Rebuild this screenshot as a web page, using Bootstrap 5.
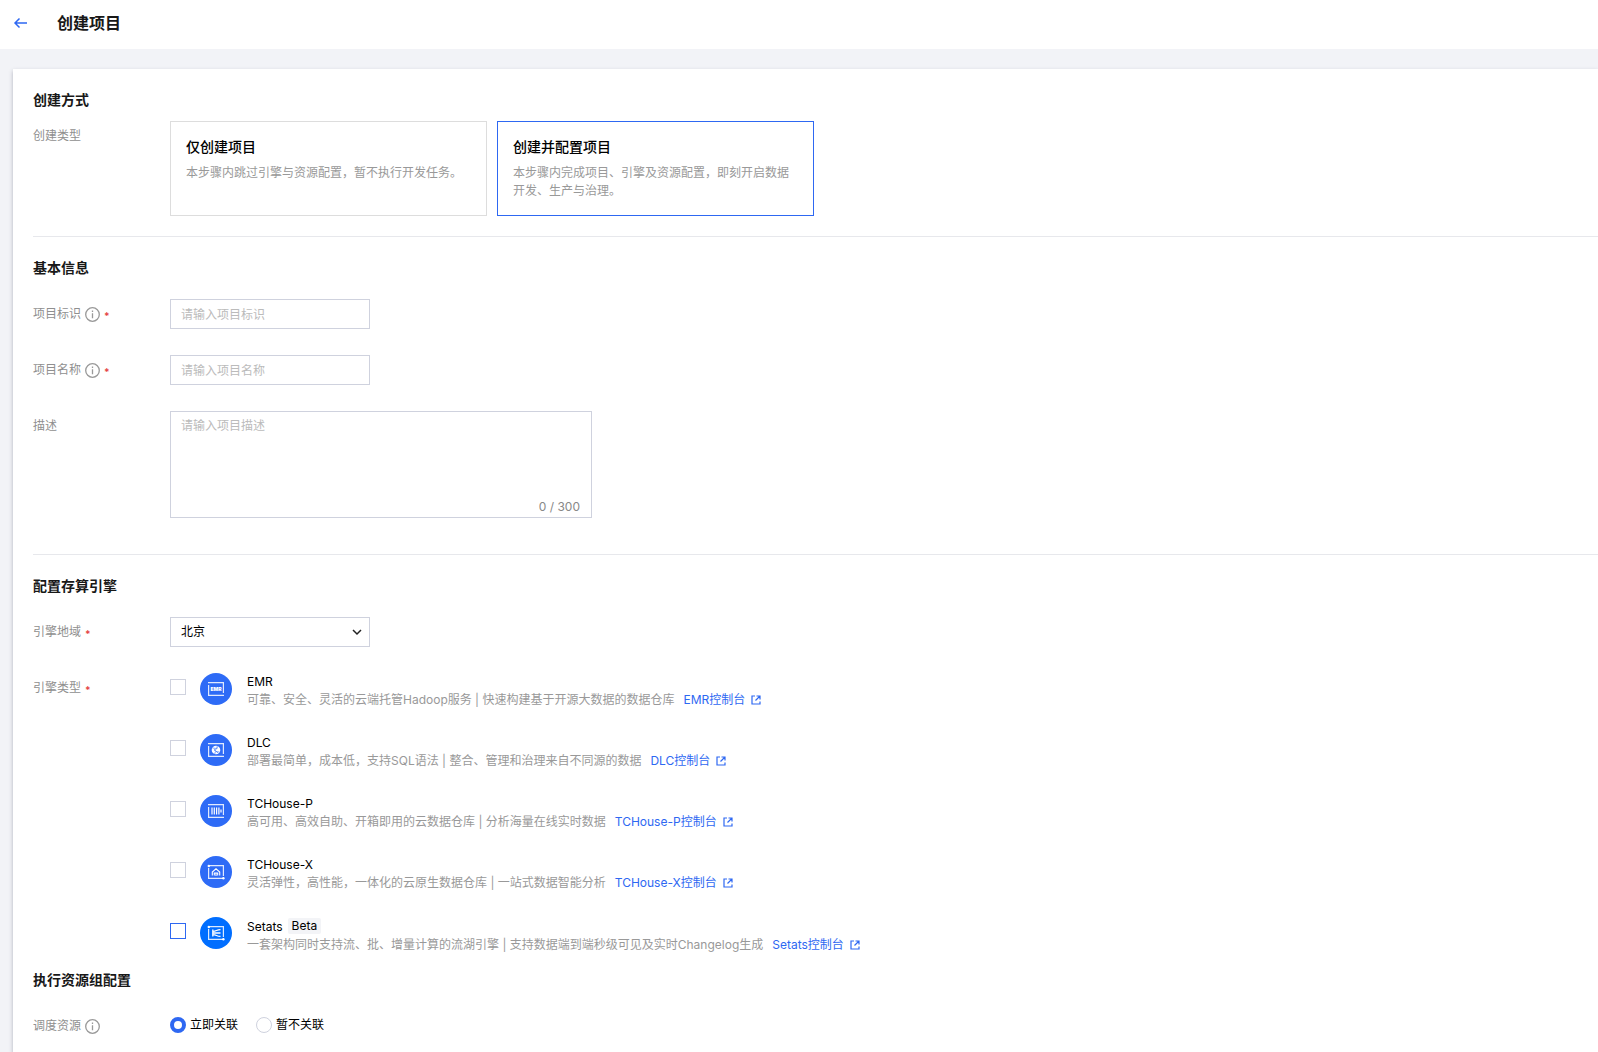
<!DOCTYPE html>
<html lang="zh-CN">
<head>
<meta charset="utf-8">
<meta name="viewport" content="width=device-width, initial-scale=1">
<title>创建项目</title>
<link href="https://cdn.jsdelivr.net/npm/bootstrap@5.3.0/dist/css/bootstrap.min.css" rel="stylesheet">
<style>
  :root { --brand: #2e68f2; --muted: #999; --line: #cfd2de; }
  body {
    font-family: Inter, "Noto Sans CJK SC", sans-serif;
    font-size: 12px; line-height: 18px; color: #000; background: #f2f3f7;
  }
  a { color: var(--brand); text-decoration: none; }
  svg { display: block; flex: none; }
  .page-head { height: 49px; padding: 0 13px 3px; gap: 28px; }
  .page-head h1 { font-size: 16px; line-height: 24px; font-weight: 600; color: #181818; }
  .page-main { padding: 20px 0 0 13px; }
  .panel { padding: 20px 0 0 20px; box-shadow: 0 2px 4px rgba(54, 58, 80, .35); }
  .sec-title { font-size: 14px; line-height: 22px; font-weight: 600; color: #181818; margin: 0 0 20px; }
  .sec-title.tight { margin-bottom: 10px; }
  .rule { margin: 20px 0; border: 0; border-top: 1px solid #e7e8ec; opacity: 1; }
  .field { margin-bottom: 26px; }
  .field-label { flex: 0 0 137px; padding-top: 6px; color: #8f8f8f; gap: 4px; }
  .field-label svg { margin-top: 2px; }
  .req { color: #e54545; font-size: 10px; font-weight: 700; line-height: 22px; }
  .box, .box:focus {
    border: 1px solid var(--line); border-radius: 0; font-size: 12px; line-height: 18px;
    padding: 5px 10px; color: #000; box-shadow: none;
  }
  .box::placeholder { color: #bbb; }
  .w-input { width: 200px; height: 30px; }
  .desc-wrap { width: 422px; }
  .desc-wrap .box { height: 107px; resize: none; display: block; }
  .counter { right: 12px; bottom: 2px; color: #888; }
  .pick {
    background: #fff url("data:image/svg+xml,%3Csvg xmlns='http://www.w3.org/2000/svg' viewBox='0 0 10 10'%3E%3Cpath d='M1 3l4 4 4-4' fill='none' stroke='%23222' stroke-width='1.5'/%3E%3C/svg%3E") no-repeat right 7px center / 10px 10px;
  }
  .modes { gap: 10px; }
  .mode { width: 317px; min-height: 95px; padding: 14px 15px; border: 1px solid #ddd; cursor: pointer; }
  .btn-check:checked + .mode { border-color: var(--brand); }
  .mode-name { font-size: 14px; line-height: 22px; font-weight: 500; margin-bottom: 6px; }
  .mode-desc { color: var(--muted); }
  .tick, .dot { appearance: none; width: 16px; height: 16px; margin: 0; border: 1px solid var(--line); background: #fff; flex: none; }
  .tick { margin-top: 6px; }
  .tick.active { border-color: var(--brand); }
  .dot { border-radius: 50%; }
  .dot:checked { border: 4px solid var(--brand); }
  .engines { gap: 25px; margin-bottom: 15px; }
  .engine-icon { margin: 0 15px 0 14px; }
  .engine-desc { color: var(--muted); margin-right: 9px; }
  .ext { gap: 6px; }
  .beta { background: #f3f4f7; border-radius: 2px; padding: 0 4px; line-height: 16px; margin: 1px 0 2px 5px; }
  .choice { gap: 4px; margin-right: 18px; padding-bottom: 2px; }
  .choices { padding-top: 5px; }
</style>
<script src="https://cdn.jsdelivr.net/npm/bootstrap@5.3.0/dist/js/bootstrap.bundle.min.js"></script>
</head>
<body class="min-vh-100 d-flex flex-column">
<svg width="0" height="0" class="position-absolute" aria-hidden="true">
  <symbol id="info" viewBox="0 0 15 15"><circle cx="7.500" cy="7.500" r="6.800" fill="none" stroke="#999" stroke-width="1.300"/><path d="M7.500 3.600v1.500M7.500 6.300v5" stroke="#999" stroke-width="1.300"/></symbol>
  <symbol id="ext" viewBox="0 0 10 10"><path d="M4 1H1v8h8V6.500M5.500 1H9v3.500M9 1L4.500 5.500" fill="none" stroke="#2e68f2" stroke-width="1.200"/></symbol>
  <symbol id="frame" viewBox="0 0 32 32"><path d="M8 9.700h15.400V20M8.600 12v10.300H24" fill="none" stroke="#fff" stroke-opacity=".85" stroke-width="1.200"/></symbol>
</svg>

<header class="page-head bg-white d-flex align-items-center">
  <a href="#" aria-label="返回"><svg width="16" height="16" viewBox="0 0 16 16"><path d="M14 8H2M6.500 3.500L2 8l4.500 4.500" fill="none" stroke="#2e68f2" stroke-width="1.500"/></svg></a>
  <h1 class="m-0">创建项目</h1>
</header>

<main class="page-main flex-grow-1 d-flex flex-column">
<form class="panel bg-white flex-grow-1">
  <h2 class="sec-title tight">创建方式</h2>
  <div class="d-flex">
    <div class="field-label">创建类型</div>
    <div class="modes d-flex">
      <input class="btn-check" type="radio" name="mode" id="modeOnly">
      <label class="mode" for="modeOnly"><div class="mode-name">仅创建项目</div><div class="mode-desc">本步骤内跳过引擎与资源配置，暂不执行开发任务。</div></label>
      <input class="btn-check" type="radio" name="mode" id="modeFull" checked>
      <label class="mode" for="modeFull"><div class="mode-name">创建并配置项目</div><div class="mode-desc">本步骤内完成项目、引擎及资源配置，即刻开启数据开发、生产与治理。</div></label>
    </div>
  </div>
  <hr class="rule">

  <h2 class="sec-title">基本信息</h2>
  <div class="field d-flex">
    <label class="field-label d-flex" for="pid">项目标识<svg width="15" height="15"><use href="#info"/></svg><span class="req">*</span></label>
    <input id="pid" type="text" class="form-control box w-input" placeholder="请输入项目标识">
  </div>
  <div class="field d-flex">
    <label class="field-label d-flex" for="pname">项目名称<svg width="15" height="15"><use href="#info"/></svg><span class="req">*</span></label>
    <input id="pname" type="text" class="form-control box w-input" placeholder="请输入项目名称">
  </div>
  <div class="d-flex pb-3">
    <label class="field-label" for="pdesc">描述</label>
    <div class="desc-wrap position-relative">
      <textarea id="pdesc" class="form-control box" placeholder="请输入项目描述"></textarea>
      <span class="counter position-absolute">0 / 300</span>
    </div>
  </div>
  <hr class="rule">

  <h2 class="sec-title">配置存算引擎</h2>
  <div class="field d-flex">
    <label class="field-label d-flex" for="region">引擎地域<span class="req">*</span></label>
    <select id="region" class="form-select box pick w-input"><option>北京</option></select>
  </div>
  <div class="d-flex">
    <div class="field-label d-flex">引擎类型<span class="req">*</span></div>
    <div class="engines d-flex flex-column">
      <div class="d-flex align-items-start">
        <input class="tick" type="checkbox" id="e1">
        <svg class="engine-icon" width="32" height="32"><circle cx="16" cy="16" r="16" fill="#2e6bf6"/><use href="#frame"/><text x="16" y="18" font-size="5" font-weight="900" fill="#fff" text-anchor="middle">EMR</text></svg>
        <div><label class="d-block" for="e1">EMR</label>
          <div class="d-flex"><span class="engine-desc">可靠、安全、灵活的云端托管Hadoop服务 | 快速构建基于开源大数据的数据仓库</span><a href="#" class="ext d-flex align-items-center">EMR控制台<svg width="10" height="10"><use href="#ext"/></svg></a></div></div>
      </div>
      <div class="d-flex align-items-start">
        <input class="tick" type="checkbox" id="e2">
        <svg class="engine-icon" width="32" height="32"><circle cx="16" cy="16" r="16" fill="#2e6bf6"/><use href="#frame"/><circle cx="16" cy="16" r="4.300" fill="#fff"/><path d="M12.500 14l4 .5 1-3M19.500 18l-4-.5-1 3M14 15l4 4M18 13.500l-4 3.500" stroke="#2e6bf6" stroke-width=".6" fill="none"/></svg>
        <div><label class="d-block" for="e2">DLC</label>
          <div class="d-flex"><span class="engine-desc">部署最简单，成本低，支持SQL语法 | 整合、管理和治理来自不同源的数据</span><a href="#" class="ext d-flex align-items-center">DLC控制台<svg width="10" height="10"><use href="#ext"/></svg></a></div></div>
      </div>
      <div class="d-flex align-items-start">
        <input class="tick" type="checkbox" id="e3">
        <svg class="engine-icon" width="32" height="32"><circle cx="16" cy="16" r="16" fill="#2e6bf6"/><use href="#frame"/><path d="M12 12.500v7M14.300 12.500v7M16.600 12.500v7M18.900 12.500v7M21 14.500v3" stroke="#fff" stroke-width="1.200"/></svg>
        <div><label class="d-block" for="e3">TCHouse-P</label>
          <div class="d-flex"><span class="engine-desc">高可用、高效自助、开箱即用的云数据仓库 | 分析海量在线实时数据</span><a href="#" class="ext d-flex align-items-center">TCHouse-P控制台<svg width="10" height="10"><use href="#ext"/></svg></a></div></div>
      </div>
      <div class="d-flex align-items-start">
        <input class="tick" type="checkbox" id="e4">
        <svg class="engine-icon" width="32" height="32"><circle cx="16" cy="16" r="16" fill="#2e6bf6"/><use href="#frame"/><circle cx="8.800" cy="10" r="1.200" fill="#fff"/><circle cx="23.400" cy="22.300" r="1.200" fill="#fff"/><path d="M12.300 19.500V16l3.700-3.200 3.700 3.200v3.500M14.300 19.500V17h3.400v2.500M16 17V20" fill="none" stroke="#fff" stroke-width="1.100"/></svg>
        <div><label class="d-block" for="e4">TCHouse-X</label>
          <div class="d-flex"><span class="engine-desc">灵活弹性，高性能，一体化的云原生数据仓库 | 一站式数据智能分析</span><a href="#" class="ext d-flex align-items-center">TCHouse-X控制台<svg width="10" height="10"><use href="#ext"/></svg></a></div></div>
      </div>
      <div class="d-flex align-items-start">
        <input class="tick active" type="checkbox" id="e5">
        <svg class="engine-icon" width="32" height="32"><circle cx="16" cy="16" r="16" fill="#006eff"/><use href="#frame"/><circle cx="8.800" cy="10" r="1.200" fill="#fff"/><circle cx="23.400" cy="22.300" r="1.200" fill="#fff"/><path d="M12.800 12.500v7M13 16h7.500M13 14.300c3.500 0 3.500-1.700 7.500-1.700M13 17.700c3.500 0 3.500 1.700 7.500 1.700" fill="none" stroke="#fff" stroke-width="1.300"/></svg>
        <div><label class="d-flex align-items-center" for="e5">Setats<span class="beta">Beta</span></label>
          <div class="d-flex"><span class="engine-desc">一套架构同时支持流、批、增量计算的流湖引擎 | 支持数据端到端秒级可见及实时Changelog生成</span><a href="#" class="ext d-flex align-items-center">Setats控制台<svg width="10" height="10"><use href="#ext"/></svg></a></div></div>
      </div>
    </div>
  </div>

  <h2 class="sec-title">执行资源组配置</h2>
  <div class="d-flex align-items-start">
    <div class="field-label d-flex">调度资源<svg width="15" height="15"><use href="#info"/></svg></div>
    <div class="choices d-flex">
      <label class="choice d-flex align-items-center"><input class="dot" type="radio" name="sched" checked>立即关联</label>
      <label class="choice d-flex align-items-center"><input class="dot" type="radio" name="sched">暂不关联</label>
    </div>
  </div>
</form>
</main>
</body>
</html>
